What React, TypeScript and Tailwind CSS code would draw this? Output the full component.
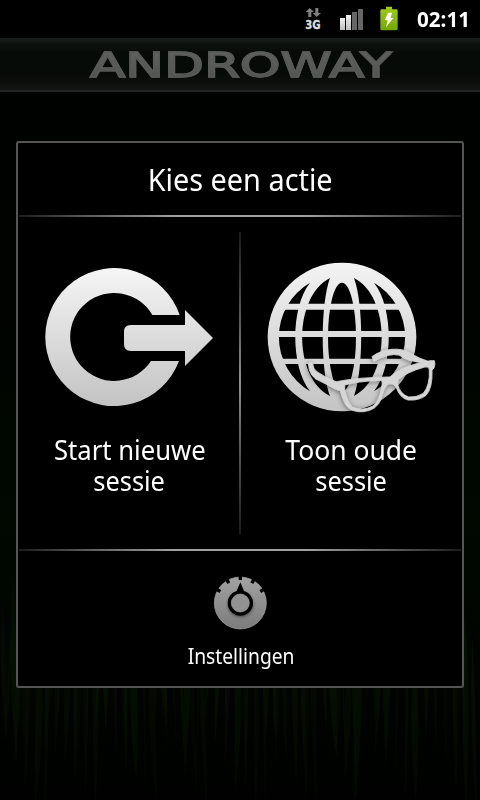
import React from "react";

const blades = Array.from({ length: 80 }, (_, i) => {
  const x = (i * 37.7) % 480;
  const top = 540 + ((i * 53) % 120);
  const end = 720 + ((i * 71) % 100);
  const w = 2 + ((i * 13) % 6);
  const lean = ((i * 29) % 13) - 6;
  return { d: `M${x} ${top}Q${x + w} ${(top + end) / 2} ${x + lean} ${end}Q${x - w} ${(top + end) / 2} ${x} ${top}Z`, o: 0.3 + ((i * 17) % 50) / 100 };
});

function Grass() {
  return (
    <svg className="absolute inset-0 h-full w-full" viewBox="0 0 480 800" aria-hidden="true">
      <defs>
        <linearGradient id="glow" x1="0" y1="0" x2="0" y2="1">
          <stop offset="0" stopColor="#000100" />
          <stop offset=".35" stopColor="#000300" />
          <stop offset=".65" stopColor="#000800" />
          <stop offset=".85" stopColor="#010401" />
          <stop offset="1" stopColor="#000100" />
        </linearGradient>
        <linearGradient id="blade" gradientUnits="userSpaceOnUse" x1="0" y1="560" x2="0" y2="800">
          <stop offset="0" stopColor="#030c02" />
          <stop offset=".4" stopColor="#081403" />
          <stop offset="1" stopColor="#040a02" />
        </linearGradient>
      </defs>
      <rect width="480" height="800" fill="url(#glow)" />
      {blades.map((b, i) => (
        <path key={i} d={b.d} fill="url(#blade)" opacity={b.o} />
      ))}
    </svg>
  );
}

function StatusBar() {
  return (
    <header className="flex h-[38px] shrink-0 items-center justify-end bg-black">
      <svg width="102" height="30" viewBox="0 0 306 90" className="mr-[15px]">
        <defs>
          <linearGradient id="bat" x1="0" y1="0" x2="0" y2="1">
            <stop offset="0" stopColor="#a2cc1c" />
            <stop offset="1" stopColor="#72a800" />
          </linearGradient>
          <linearGradient id="sig" x1="0" y1="0" x2="0" y2="1">
            <stop offset="0" stopColor="#f0f0f0" />
            <stop offset="1" stopColor="#bdbdbd" />
          </linearGradient>
        </defs>
        <path d="M29 12l13 12h-8v15h-9V24h-8zM50 39L38 27h8V12h9v15h8z" fill="#808080" />
        <text x="16" y="75" fontSize="38" fontWeight="700" fontFamily="'DejaVu Sans', sans-serif" textLength="46" lengthAdjust="spacingAndGlyphs" fill="#dedede" stroke="#dedede" strokeWidth="1">3G</text>
        <rect x="120" y="42" width="15" height="36" fill="url(#sig)" />
        <rect x="138" y="33" width="15" height="45" fill="url(#sig)" />
        <rect x="156" y="24" width="15" height="54" fill="#666" />
        <rect x="174" y="15" width="15" height="63" fill="#666" />
        <path d="M258 8h18v8h13q4 0 4 4v54q0 5-5 5h-42q-5 0-5-5V20q0-4 4-4h13z" fill="url(#bat)" />
        <path d="M264 26h13l-6 15 9 1-22 28 5-21-9-1z" fill="#fff" />
      </svg>
      <span className="mr-[10px] h-[38px] w-[53px] whitespace-nowrap">
        <span className="inline-block origin-left scale-x-[0.96] font-['Noto_Sans',sans-serif] text-[21.5px] font-bold leading-[37px] text-white">02:11</span>
      </span>
    </header>
  );
}

function TitleBar() {
  return (
    <div className="flex h-[54px] shrink-0 items-center justify-center border-b-2 border-[#222523] bg-[linear-gradient(to_bottom,#1b201c_0%,#0c110d_12%,#070b07_30%,#070b07_70%,#121513_100%)]">
      <h1 className="scale-x-[1.5] whitespace-nowrap bg-linear-to-b from-[#666866] to-[#4b4d4b] bg-clip-text pl-px pt-px font-['DejaVu_Sans',sans-serif] text-[34.5px] leading-[52px] text-transparent [-webkit-text-stroke:1.3px_#585a58]">
        ANDROWAY
      </h1>
    </div>
  );
}

function StartIcon() {
  return (
    <svg width="200" height="170" viewBox="0 0 600 510" className="ml-[2px] shrink-0">
      <defs>
        <linearGradient id="metalA" gradientUnits="userSpaceOnUse" x1="0" y1="54" x2="0" y2="467">
          <stop offset="0" stopColor="#f5f5f5" />
          <stop offset="1" stopColor="#c3c3c3" />
        </linearGradient>
      </defs>
      <g fill="url(#metalA)">
        <path d="M449 195A207 207 0 1 0 447 333H363A132 132 0 1 1 367 195Z" />
        <path d="M302 225H465V180L549 264L465 348V303H302Q282 303 282 283V245Q282 225 302 225Z" />
      </g>
    </svg>
  );
}

function GlobeIcon() {
  return (
    <svg width="200" height="170" viewBox="0 0 600 510" className="ml-[5px] shrink-0">
      <defs>
        <linearGradient id="metalB" gradientUnits="userSpaceOnUse" x1="0" y1="39" x2="0" y2="483">
          <stop offset="0" stopColor="#f3f3f3" />
          <stop offset="1" stopColor="#c4c4c4" />
        </linearGradient>
        <filter id="lift" x="-20%" y="-30%" width="140%" height="160%">
          <feDropShadow dx="-2" dy="3" stdDeviation="8" floodColor="#000" floodOpacity=".5" />
        </filter>
        <g id="side">
          <path d="M165 98A189 189 0 0 0 165 424C106 350 106 172 165 98Z" />
          <path d="M225 84C114 140 114 382 225 438C196 360 196 162 225 84Z" />
        </g>
      </defs>
      <circle cx="261" cy="261" r="223" fill="url(#metalB)" />
      <g fill="#000">
        <use href="#side" />
        <use href="#side" transform="matrix(-1 0 0 1 522 0)" />
        <ellipse cx="261" cy="261" rx="42" ry="163" />
      </g>
      <path d="M80 161H442V179H80ZM60 243H462V261H60ZM80 326H442V342H80Z" fill="url(#metalB)" />
      <g transform="translate(135 270)" fill="#d6d6d6" stroke="#d6d6d6" strokeWidth="2.5" strokeLinejoin="round" fillRule="evenodd" filter="url(#lift)">
        <path d="M216 50Q240 32 275 28Q312 25 335 42Q358 56 390 66L380 71Q350 66 330 61Q311 55 297 45Q265 38 222 64Z" />
        <path d="M25 71Q32 65 38 70Q39 88 52 96Q75 112 107 125L104 146Q78 132 60 123Q28 112 25 71Z" />
        <path d="M105 126Q170 112 270 111Q300 83 355 70Q380 66 390 62L403 62Q407 72 402 84L396 90Q398 145 378 166Q358 182 325 180Q299 174 288 140Q282 128 264 132Q250 145 243 178Q230 211 190 215Q155 218 138 195Q126 172 121 152L105 147ZM134 135Q170 124 240 121Q249 121 246 137Q240 183 219 198Q187 215 158 202Q141 185 134 150ZM294 119Q320 96 374 81Q386 78 388 87Q391 135 370 160Q351 173 326 171Q301 163 292 132Z" />
      </g>
    </svg>
  );
}

function KnobIcon() {
  return (
    <svg width="60" height="60" viewBox="0 0 180 180">
      <defs>
        <linearGradient id="knob" x1="0" y1="0" x2="0" y2="1">
          <stop offset="0" stopColor="#a2a2a2" />
          <stop offset="1" stopColor="#7c7c7c" />
        </linearGradient>
        <filter id="soft" x="-30%" y="-30%" width="160%" height="160%">
          <feGaussianBlur stdDeviation="4" />
        </filter>
      </defs>
      <circle cx="91" cy="93" r="78" fill="url(#knob)" stroke="#a5a5a5" strokeWidth="2" />
      <g fill="#000">
        {[-60, -30, 0, 30, 60].map((a) => (
          <path key={a} d="M86 10H96V24H86Z" transform={`rotate(${a} 91 93)`} />
        ))}
        <circle cx="92" cy="98" r="38" opacity=".4" filter="url(#soft)" />
        <path d="M91 31L102 57Q128 65 129 93A38 38 0 0 1 53 93Q54 65 80 57Z" />
      </g>
      <circle cx="91" cy="93" r="27" fill="#929292" stroke="#a8a8a8" strokeWidth="2" />
    </svg>
  );
}

const line = "h-[2px] shrink-0 bg-[linear-gradient(to_right,#1c1c1c_0%,#5a5a5a_15%,#a0a0a0_35%,#a0a0a0_65%,#5a5a5a_85%,#1c1c1c_100%)]";
const label = "mt-[14px] flex flex-col items-center text-[27px] leading-[31px]";

export default function App() {
  return (
    <div className="relative h-[800px] w-[480px] overflow-hidden bg-black font-['Noto_Sans',sans-serif] text-white">
      <Grass />
      <div className="relative flex h-full flex-col">
        <StatusBar />
        <TitleBar />
        <main className="mx-4 mt-[49px] flex h-[547px] flex-col rounded-[3px] border-2 border-[#555] bg-black px-px">
          <h2 className="flex h-[72px] shrink-0 items-center justify-center text-[30px] leading-[40px]">
            <span className="inline-block scale-x-[0.962] pl-px pt-[2px]">Kies een actie</span>
          </h2>
          <div className={line} />
          <section className="flex h-[332px] shrink-0">
            <button className="flex w-[220px] flex-col items-center pt-[33px]">
              <StartIcon />
              <span className={`${label} ml-px`}>
                <span className="scale-x-[0.95]">Start nieuwe</span>
                <span className="scale-x-[0.94]">sessie</span>
              </span>
            </button>
            <div className="mt-[15px] h-[302px] w-[2px] bg-linear-to-b from-[#1c1c1c] via-[#909090] to-[#1c1c1c]" />
            <button className="flex w-[220px] flex-col items-center pl-[2px] pt-[33px]">
              <GlobeIcon />
              <span className={`${label} -ml-px`}>
                <span className="scale-x-[0.98]">Toon oude</span>
                <span className="scale-x-[0.94]">sessie</span>
              </span>
            </button>
          </section>
          <div className={line} />
          <button className="flex flex-col items-center pt-[21px]">
            <KnobIcon />
            <span className="ml-[2px] mt-[8px] scale-x-[0.875] text-[22px] leading-[30px]">Instellingen</span>
          </button>
        </main>
      </div>
    </div>
  );
}
